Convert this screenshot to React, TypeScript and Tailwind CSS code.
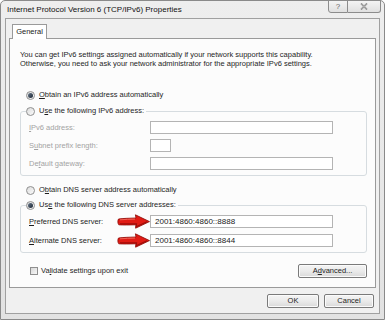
import React from 'react';

function U({ children }: { children: React.ReactNode }) {
  return <span className="underline underline-offset-[1px]">{children}</span>;
}

function Radio({ checked }: { checked?: boolean }) {
  return (
    <span className="flex h-[9px] w-[9px] shrink-0 items-center justify-center rounded-full border border-[#8f8f8f] bg-linear-to-br from-[#dcdcdc] to-[#fbfbfb]">
      {checked && <span className="h-[5px] w-[5px] rounded-full bg-linear-to-br from-[#6a7a8c] to-[#1c2633]" />}
    </span>
  );
}

function Arrow() {
  return (
    <svg width="33" height="15" viewBox="0 0 33 15" className="shrink-0">
      <path
        d="M1.5 5 C6 4.4 12 4.2 19 4 L18.4 0.8 L32.5 7.6 L18.6 14.2 L19 10.8 C12 11 6 11.1 1.8 10.8 C0.6 9.2 0.6 6.6 1.5 5 Z"
        fill="#e11b14"
        stroke="#8a0a06"
        strokeWidth="0.8"
      />
      <path d="M3 9.8 C8 10.1 13 10 19.5 9.8 L19.2 12.8 L30 7.8" fill="none" stroke="#a10d08" strokeWidth="1.2" />
      <path d="M3 5.8 C8 5.4 13 5.2 18 5.1" fill="none" stroke="#f36a5e" strokeWidth="0.9" />
    </svg>
  );
}

function Field({ className = 'w-[183px]', value }: { className?: string; value?: string }) {
  return (
    <div className={`flex h-[13px] shrink-0 items-center border border-[#b4b4b4] bg-white pl-[4px] text-[8px] text-[#222] ${className}`}>
      {value}
    </div>
  );
}

function Button({ children, className = '' }: { children: React.ReactNode; className?: string }) {
  return (
    <div className={`flex h-[14px] shrink-0 items-center justify-center rounded-[2px] border border-[#7a7a7a] bg-linear-to-b from-[#f4f4f4] via-[#ebebeb] to-[#d9d9d9] text-[7.5px] text-[#222] shadow-[inset_0_0_0_1px_#fbfbfb] ${className}`}>
      {children}
    </div>
  );
}

export default function App() {
  return (
    <div className="h-[320px] w-[385px] overflow-hidden bg-white font-['Liberation_Sans',Arial,sans-serif]">
      <div className="flex h-full w-full flex-col rounded-t-[5px] border border-[#8a8a8a] bg-linear-to-b from-[#eeeeee] to-[#e2e2e2] px-[4px] pb-[5px]">
        {/* title bar */}
        <div className="flex h-[17px] shrink-0 items-start justify-between">
          <div className="pl-[2px] pt-[4px] text-[8px] leading-[10px] text-[#111]">
            Internet Protocol Version 6 (TCP/IPv6) Properties
          </div>
          <div className="mr-[-1px] mt-[-1px] flex h-[13px]">
            <div className="flex w-[20px] items-center justify-center rounded-bl-[3px] border border-[#8c8c8c] bg-linear-to-b from-[#f4f4f4] to-[#e0e0e0] text-[8px] text-[#666]">
              ?
            </div>
            <div className="flex w-[33px] items-center justify-center rounded-br-[3px] border border-l-0 border-[#8c8c8c] bg-linear-to-b from-[#f4f4f4] to-[#e0e0e0]">
              <svg width="8" height="7" viewBox="0 0 8 7">
                <path d="M1 0.5 L7 6.5 M7 0.5 L1 6.5" stroke="#7a7a7a" strokeWidth="1.6" fill="none" />
                <path d="M1 0.5 L7 6.5 M7 0.5 L1 6.5" stroke="#f4f4f4" strokeWidth="0.5" fill="none" />
              </svg>
            </div>
          </div>
        </div>

        {/* body */}
        <div className="flex flex-1 flex-col border border-[#a0a0a0] bg-[#f0f0f0] px-[3px] pt-[5px]">
          {/* tabs */}
          <div className="flex shrink-0 pl-[3px]">
            <div className="relative z-10 -mb-px flex h-[15px] w-[35px] items-center justify-center border border-b-0 border-[#9a9a9a] bg-white text-[7.5px] text-[#222]">
              General
            </div>
          </div>

          {/* panel */}
          <div className="flex h-[250px] shrink-0 flex-col border border-[#9a9a9a] bg-[#fcfcfc] pl-[10px] pr-[8px] pt-[12px] text-[7.5px] text-[#1e1e1e]">
            <p className="leading-[8.5px]">
              You can get IPv6 settings assigned automatically if your network supports this capability.
              <br />
              Otherwise, you need to ask your network administrator for the appropriate IPv6 settings.
            </p>

            <div className="mt-[22px] flex items-center gap-[4px] pl-[6px] leading-[10px]">
              <Radio checked />
              <span>
                <U>O</U>btain an IPv6 address automatically
              </span>
            </div>

            <fieldset className="mt-[6px] rounded-[3px] border border-[#d6dce0] pb-[5px] pl-[5px] pr-[4px]">
              <legend className="flex items-center gap-[4px] bg-[#fcfcfc] pr-[2px] leading-[10px]">
                <Radio />
                <span>
                  U<U>s</U>e the following IPv6 address:
                </span>
              </legend>
              <div className="flex flex-col gap-[5px] pt-[5px] text-[#a3a3a3]">
                <div className="flex items-center">
                  <span className="w-[124px] shrink-0 pl-[3px]">
                    <U>I</U>Pv6 address:
                  </span>
                  <Field />
                </div>
                <div className="flex items-center">
                  <span className="w-[124px] shrink-0 pl-[3px]">
                    S<U>u</U>bnet prefix length:
                  </span>
                  <Field className="w-[21px]" />
                </div>
                <div className="flex items-center">
                  <span className="w-[124px] shrink-0 pl-[3px]">
                    De<U>f</U>ault gateway:
                  </span>
                  <Field />
                </div>
              </div>
            </fieldset>

            <div className="mt-[9px] flex items-center gap-[4px] pl-[6px] leading-[10px]">
              <Radio />
              <span>
                O<U>b</U>tain DNS server address automatically
              </span>
            </div>

            <fieldset className="mt-[5px] rounded-[3px] border border-[#d6dce0] pb-[4px] pl-[5px] pr-[4px]">
              <legend className="flex items-center gap-[4px] bg-[#fcfcfc] pr-[2px] leading-[10px]">
                <Radio checked />
                <span>
                  Us<U>e</U> the following DNS server addresses:
                </span>
              </legend>
              <div className="flex flex-col gap-[4px] pt-[4px]">
                <div className="flex items-center">
                  <span className="w-[91px] shrink-0 pl-[3px]">
                    <U>P</U>referred DNS server:
                  </span>
                  <Arrow />
                  <Field value="2001:4860:4860::8888" />
                </div>
                <div className="flex items-center">
                  <span className="w-[91px] shrink-0 pl-[3px]">
                    <U>A</U>lternate DNS server:
                  </span>
                  <Arrow />
                  <Field value="2001:4860:4860::8844" />
                </div>
              </div>
            </fieldset>

            <div className="mt-[11px] flex items-center justify-between">
              <div className="flex items-center gap-[3px] pl-[10px] leading-[10px]">
                <span className="h-[8px] w-[8px] border border-[#8f8f8f] bg-linear-to-br from-[#d8d8d8] to-[#f8f8f8]" />
                <span>
                  Va<U>l</U>idate settings upon exit
                </span>
              </div>
              <Button className="w-[69px]">
                A<U>d</U>vanced...
              </Button>
            </div>
          </div>

          {/* footer buttons */}
          <div className="flex shrink-0 justify-end gap-[5px] pr-[2px] pt-[6px]">
            <Button className="w-[52px]">OK</Button>
            <Button className="w-[50px]">Cancel</Button>
          </div>
        </div>
      </div>
    </div>
  );
}
